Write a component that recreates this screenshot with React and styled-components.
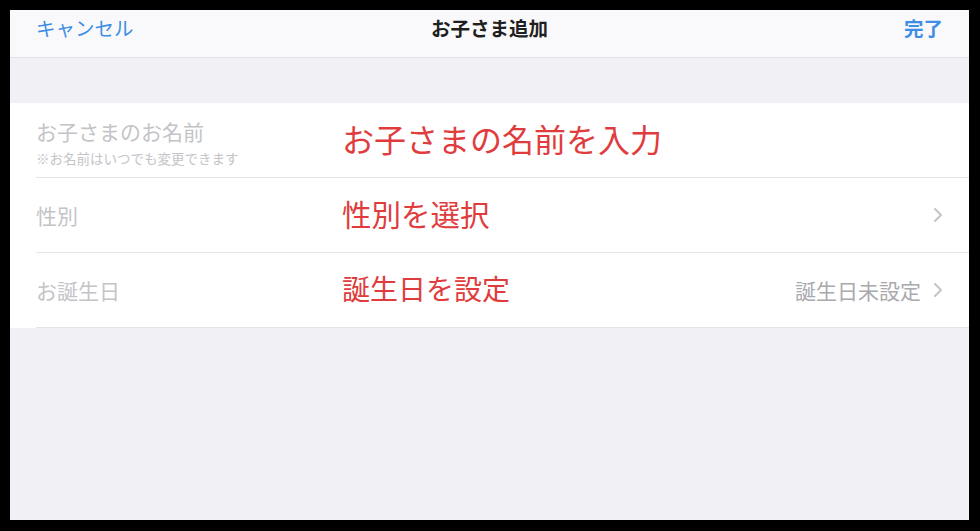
import React from 'react';
import styled, { createGlobalStyle } from 'styled-components';

const GlobalStyle = createGlobalStyle`
  html, body {
    margin: 0;
    padding: 0;
    background: #000;
  }
  body {
    font-family: "Noto Sans CJK JP", "Noto Sans", sans-serif;
  }
`;

const Frame = styled.div`
  margin: 10px 11px 11px 10px;
  height: 510px;
  background: #f0f0f5;
  display: flex;
  flex-direction: column;
  overflow: hidden;
`;

const NavBar = styled.div`
  height: 48px;
  box-sizing: border-box;
  background: #f9f9fb;
  border-bottom: 1px solid #e1e1e6;
  display: grid;
  grid-template-columns: 1fr auto 1fr;
  align-items: start;
  padding: 4px 26px 0 26px;
`;

const NavButton = styled.span`
  color: #3d8ee4;
  font-size: 19.5px;
  line-height: 28px;
  font-weight: ${({ bold }) => (bold ? 700 : 400)};
  justify-self: ${({ end }) => (end ? 'end' : 'start')};
`;

const Title = styled.span`
  color: #1f1f22;
  font-size: 19.5px;
  line-height: 28px;
  font-weight: 700;
`;

const Gap = styled.div`
  height: 45px;
`;

const Table = styled.div`
  background: #fff;
`;

const Row = styled.div`
  height: 74px;
  margin-left: 26px;
  padding-right: 26px;
  border-bottom: 1px solid #e4e4e8;
  display: flex;
  align-items: center;
`;

const Label = styled.div`
  width: 306px;
  flex-shrink: 0;
  display: flex;
  flex-direction: column;
  gap: 6px;
  padding-top: ${({ stacked }) => (stacked ? 3 : 0)}px;
`;

const LabelText = styled.span`
  color: #c4c4c8;
  font-size: 21px;
  line-height: 26px;
`;

const Note = styled.span`
  color: #c4c4c8;
  font-size: 13.5px;
  line-height: 16px;
`;

const Hint = styled.span`
  flex: 1;
  color: #e03c3e;
  font-size: ${({ size }) => size}px;
  margin-top: -5px;
`;

const Value = styled.span`
  color: #a9a9ae;
  font-size: 21px;
  margin-right: 12px;
`;

const Chevron = () => (
  <svg width="10" height="16" viewBox="0 0 10 16">
    <path d="M2 2 L8 8 L2 14" fill="none" stroke="#c4c4c9" strokeWidth="2" strokeLinecap="round" strokeLinejoin="round" />
  </svg>
);

export default function App() {
  return (
    <>
      <GlobalStyle />
      <Frame>
        <NavBar>
          <NavButton>キャンセル</NavButton>
          <Title>お子さま追加</Title>
          <NavButton end bold>完了</NavButton>
        </NavBar>
        <Gap />
        <Table>
          <Row>
            <Label stacked>
              <LabelText>お子さまのお名前</LabelText>
              <Note>※お名前はいつでも変更できます</Note>
            </Label>
            <Hint size={32}>お子さまの名前を入力</Hint>
          </Row>
          <Row>
            <Label>
              <LabelText>性別</LabelText>
            </Label>
            <Hint size={29.5}>性別を選択</Hint>
            <Chevron />
          </Row>
          <Row>
            <Label>
              <LabelText>お誕生日</LabelText>
            </Label>
            <Hint size={28}>誕生日を設定</Hint>
            <Value>誕生日未設定</Value>
            <Chevron />
          </Row>
        </Table>
      </Frame>
    </>
  );
}
